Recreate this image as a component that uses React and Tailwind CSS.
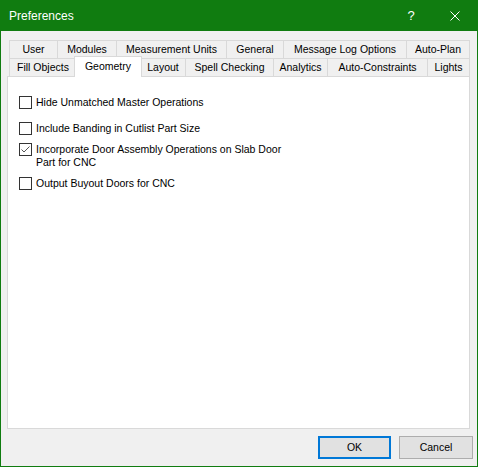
import React, { useState } from 'react';

const font = { fontFamily: '"Liberation Sans", Arial, sans-serif' };

const filaArriba = [
  { nombre: 'User', ancho: 48 },
  { nombre: 'Modules', ancho: 59 },
  { nombre: 'Measurement Units', ancho: 110 },
  { nombre: 'General', ancho: 57 },
  { nombre: 'Message Log Options', ancho: 123 },
  { nombre: 'Auto-Plan', ancho: 64 },
];

const filaAbajo = [
  { nombre: 'Fill Objects', ancho: 67 },
  { nombre: 'Geometry', ancho: 64 },
  { nombre: 'Layout', ancho: 45 },
  { nombre: 'Spell Checking', ancho: 88 },
  { nombre: 'Analytics', ancho: 54 },
  { nombre: 'Auto-Constraints', ancho: 100 },
  { nombre: 'Lights', ancho: 43 },
];

const Pestana = ({ nombre, ancho, ultima, activa, onClick }) => {
  if (activa) {
    return (
      <div
        onClick={onClick}
        className="relative z-10 -mt-[2px] -mx-[2px] h-[21px] bg-white border-l border-t border-r border-[#d9d9d9] flex items-start justify-center pt-[3px] text-[10.5px] leading-[13px] text-black"
        style={{ width: ancho + 4 }}
      >
        {nombre}
      </div>
    );
  }
  return (
    <div
      onClick={onClick}
      className={`h-[18px] bg-[#f0f0f0] border-l border-t border-[#d9d9d9] flex items-center justify-center text-[10.5px] leading-[13px] text-black ${ultima ? 'border-r' : ''}`}
      style={{ width: ancho }}
    >
      {nombre}
    </div>
  );
};

const Casilla = ({ marcada, onClick }) => (
  <div onClick={onClick} className="w-[13px] h-[13px] shrink-0 bg-white border border-[#333333] flex items-center justify-center">
    {marcada && (
      <svg width="11" height="11" viewBox="0 0 11 11">
        <path d="M1.5 5.5 L4 8 L9.5 2.5" fill="none" stroke="#555555" strokeWidth="1" />
      </svg>
    )}
  </div>
);

export default function App() {
  const [activa, setActiva] = useState('Geometry');
  const [opciones, setOpciones] = useState([false, false, true, false]);

  const alternar = (i) => setOpciones(prev => prev.map((v, j) => (j === i ? !v : v)));

  const filas = [
    { texto: 'Hide Unmatched Master Operations', mt: 'mt-[19px]' },
    { texto: 'Include Banding in Cutlist Part Size', mt: 'mt-[13px]' },
    { texto: <>Incorporate Door Assembly Operations on Slab Door<br />Part for CNC</>, mt: 'mt-[8px]' },
    { texto: 'Output Buyout Doors for CNC', mt: 'mt-[8px]' },
  ];

  return (
    <div className="w-[478px] h-[467px] border border-[#107c10] bg-[#f0f0f0] flex flex-col" style={font}>
      {/* barra de titulo */}
      <div className="h-[30px] bg-[#107c10] flex items-center text-white shrink-0">
        <span className="pl-[8px] flex-1 text-[12px]">Preferences</span>
        <div className="w-[44px] flex justify-center text-[13px]">?</div>
        <div className="w-[44px] flex justify-center">
          <svg width="10" height="10" viewBox="0 0 10 10">
            <path d="M0.5 0.5 L9.5 9.5 M9.5 0.5 L0.5 9.5" stroke="#ffffff" strokeWidth="1" />
          </svg>
        </div>
      </div>

      <div className="pl-[6px] pr-[7px] pt-[9px]">
        {/* pestañas */}
        <div className="pl-[2px]">
          <div className="flex h-[18px] items-start">
            {filaArriba.map((p, i) => (
              <Pestana key={p.nombre} {...p} ultima={i === filaArriba.length - 1} activa={activa === p.nombre} onClick={() => setActiva(p.nombre)} />
            ))}
          </div>
          <div className="flex h-[18px] items-start">
            {filaAbajo.map((p, i) => (
              <Pestana key={p.nombre} {...p} ultima={i === filaAbajo.length - 1} activa={activa === p.nombre} onClick={() => setActiva(p.nombre)} />
            ))}
          </div>
        </div>

        {/* panel */}
        <div className="h-[353px] bg-white border border-[#d9d9d9] pl-[11px] flex flex-col">
          {filas.map((f, i) => (
            <div key={i} className={`flex items-start gap-[4px] ${f.mt}`}>
              <Casilla marcada={opciones[i]} onClick={() => alternar(i)} />
              <span className="text-[10.5px] leading-[13px] text-black">{f.texto}</span>
            </div>
          ))}
        </div>
      </div>

      {/* botones */}
      <div className="flex justify-end gap-[8px] pr-[4px] mt-[7px]">
        <button className="w-[73px] h-[23px] bg-[#e1e1e1] border-2 border-[#0078d7] text-[10.5px] text-black">OK</button>
        <button className="w-[74px] h-[23px] bg-[#e1e1e1] border border-[#adadad] text-[10.5px] text-black">Cancel</button>
      </div>
    </div>
  );
}
